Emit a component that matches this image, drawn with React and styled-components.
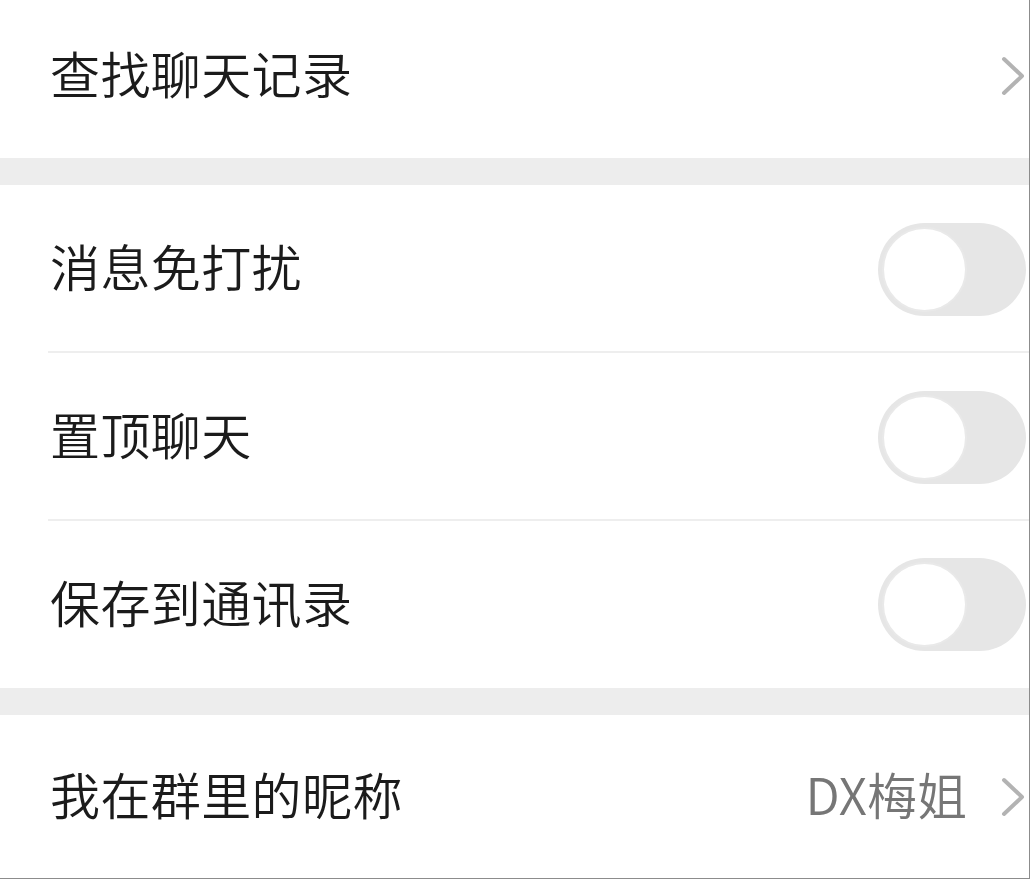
import React from "react";
import styled, { createGlobalStyle } from "styled-components";

const Global = createGlobalStyle`
  html, body { margin: 0; padding: 0; background: #ffffff; }
  * { box-sizing: border-box; }
`;

const Screen = styled.div`
  width: 1030px;
  height: 879px;
  overflow: hidden;
  background: #ffffff;
  border-right: 1px solid #8c8c8c;
  border-bottom: 1px solid #8c8c8c;
  display: flex;
  flex-direction: column;
  font-family: "Noto Sans CJK SC", "Noto Sans", sans-serif;
`;

const Band = styled.div`
  height: 27px;
  flex: none;
  background: #ededed;
`;

const Section = styled.div`
  display: flex;
  flex-direction: column;
  background: #ffffff;
`;

const Row = styled.div`
  height: ${(p) => p.$h}px;
  flex: none;
  display: flex;
  align-items: center;
  padding-left: 50px;
  padding-right: ${(p) => p.$pr ?? 4}px;
  padding-bottom: ${(p) => p.$pb ?? 0}px;
  position: relative;
  ${(p) =>
    p.$divider &&
    `
    &::after {
      content: "";
      position: absolute;
      left: 48px;
      right: 0;
      bottom: 0;
      height: 2px;
      background: #eeeeee;
    }
  `}
`;

const Label = styled.span`
  flex: 1;
  font-size: 50px;
  font-weight: 350;
  line-height: 1;
  color: #1b1b1b;
  letter-spacing: 0.4px;
  margin-bottom: 8px;
`;

const Value = styled.span`
  font-size: 50px;
  font-weight: 350;
  line-height: 1;
  color: #767676;
  margin-right: 34px;
  margin-bottom: 8px;
`;

const Track = styled.div`
  width: 148px;
  height: 93px;
  border-radius: 47px;
  background: #e6e6e6;
  display: flex;
  align-items: center;
  padding-left: 4px;
`;

const Knob = styled.div`
  width: 85px;
  height: 85px;
  border-radius: 50%;
  background: #ffffff;
  border: 2px solid #e9e9e9;
`;

const Chevron = () => (
  <svg width="24" height="40" viewBox="0 0 24 40" fill="none">
    <path d="M3 3 L21 20 L3 37" stroke="#b3b3b3" strokeWidth="4" strokeLinecap="round" strokeLinejoin="round" />
  </svg>
);

const Switch = () => (
  <Track>
    <Knob />
  </Track>
);

export default function App() {
  return (
    <>
      <Global />
      <Screen>
        <Section>
          <Row $h={158} $pb={6}>
            <Label>查找聊天记录</Label>
            <Chevron />
          </Row>
        </Section>
        <Band />
        <Section>
          <Row $h={168} $divider $pr={3}>
            <Label>消息免打扰</Label>
            <Switch />
          </Row>
          <Row $h={168} $divider $pr={3}>
            <Label>置顶聊天</Label>
            <Switch />
          </Row>
          <Row $h={167} $pr={3}>
            <Label>保存到通讯录</Label>
            <Switch />
          </Row>
        </Section>
        <Band />
        <Section>
          <Row $h={163}>
            <Label>我在群里的昵称</Label>
            <Value>DX梅姐</Value>
            <Chevron />
          </Row>
        </Section>
      </Screen>
    </>
  );
}
